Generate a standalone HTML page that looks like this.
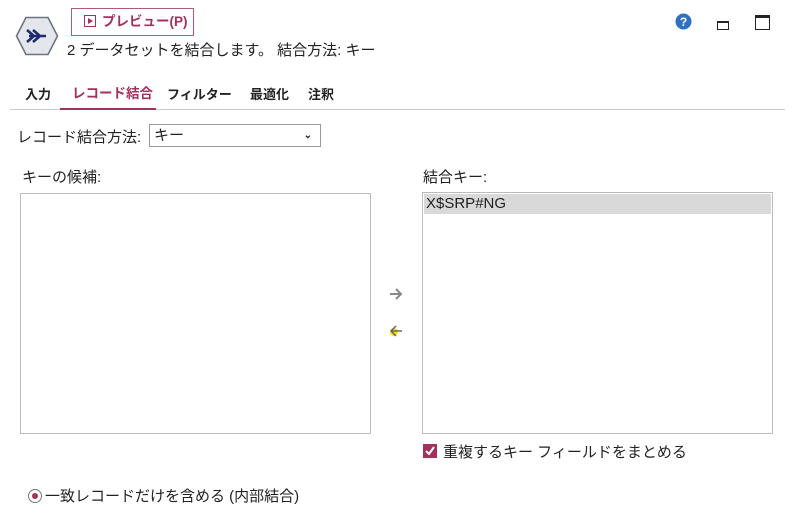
<!DOCTYPE html>
<html><head><meta charset="utf-8"><style>
body{margin:0;width:800px;height:518px;background:#fff;position:relative;overflow:hidden;font-family:"Liberation Sans","Noto Sans CJK JP",sans-serif;color:#222;font-size:15px}
.a{position:absolute;white-space:nowrap}
</style></head><body>
<svg class="a" style="left:15px;top:16px" width="44" height="40" viewBox="0 0 44 40">
<polygon points="11,1.5 33,1.5 42.5,20 33,38.5 11,38.5 1.5,20" fill="#e3e7ec" stroke="#6b7480" stroke-width="1.6"/>
<path d="M12 14 L19 20 L12 26 M18 14 L25 20 L18 26 M14 20 H31" fill="none" stroke="#1f2a6e" stroke-width="2.6"/>
</svg>
<div class="a" style="left:71px;top:8px;width:123px;height:28px;border:1px solid #b05a7a;box-sizing:border-box;color:#a3305d;font-size:13.5px;font-weight:bold;line-height:26px;padding-left:12px">
<span style="display:inline-block;width:10px;height:10px;border:1px solid #a3305d;vertical-align:-1px;position:relative;margin-right:6px"><span style="position:absolute;left:3px;top:2px;border-left:5px solid #a3305d;border-top:3px solid transparent;border-bottom:3px solid transparent"></span></span>プレビュー(P)</div>
<div class="a" style="left:67px;top:39px;font-size:15px">2 データセットを結合します。 結合方法: キー</div>
<svg class="a" style="left:675px;top:13px" width="17" height="17"><circle cx="8.5" cy="8.5" r="8" fill="#2f6fc4"/><text x="8.5" y="13" fill="#fff" font-size="12" font-weight="bold" text-anchor="middle" font-family="Liberation Sans">?</text></svg>
<div class="a" style="left:717px;top:21px;width:10px;height:6px;border:1px solid #222;border-top-width:2px"></div>
<div class="a" style="left:755px;top:15px;width:13px;height:11px;border:1px solid #222;border-top-width:3px"></div>
<div class="a" style="left:25px;top:84px;font-size:13px;font-weight:bold">入力</div>
<div class="a" style="left:72px;top:82px;font-size:13.5px;font-weight:bold;color:#a3305d">レコード結合</div>
<div class="a" style="left:167px;top:84px;font-size:13px;font-weight:bold">フィルター</div>
<div class="a" style="left:250px;top:84px;font-size:13px;font-weight:bold">最適化</div>
<div class="a" style="left:308px;top:84px;font-size:13px;font-weight:bold">注釈</div>
<div class="a" style="left:10px;top:109px;width:775px;height:1px;background:#ccc"></div>
<div class="a" style="left:60px;top:108px;width:96px;height:2px;background:#a3305d"></div>
<div class="a" style="left:17px;top:126px">レコード結合方法:</div>
<div class="a" style="left:149px;top:124px;width:172px;height:23px;border:1px solid #999;box-sizing:border-box;line-height:21px;padding-left:4px">キー<span style="position:absolute;right:8px;top:0;font-size:10px;font-weight:bold">&#8964;</span></div>
<div class="a" style="left:22px;top:166px">キーの候補:</div>
<div class="a" style="left:20px;top:193px;width:351px;height:241px;border:1px solid #bbb;box-sizing:border-box"></div>
<div class="a" style="left:423px;top:166px">結合キー:</div>
<div class="a" style="left:422px;top:192px;width:351px;height:242px;border:1px solid #bbb;box-sizing:border-box;padding:1px">
<div style="background:#d9d9d9;height:20px;line-height:20px;padding-left:2px">X$SRP#NG</div></div>
<svg class="a" style="left:388px;top:287px" width="16" height="14"><path d="M2 7H13M8 2L13 7L8 12" fill="none" stroke="#888" stroke-width="2"/></svg>
<svg class="a" style="left:388px;top:324px" width="16" height="14"><circle cx="6" cy="8" r="4" fill="#f5e400"/><path d="M3 7H14M8 2L3 7L8 12" fill="none" stroke="#666" stroke-width="1.5"/></svg>
<div class="a" style="left:423px;top:444px;width:14px;height:14px;background:#a3305d"><svg width="14" height="14"><path d="M3 7L6 10L11 3" fill="none" stroke="#fff" stroke-width="2"/></svg></div>
<div class="a" style="left:443px;top:441px">重複するキー フィールドをまとめる</div>
<div class="a" style="left:28px;top:489px;width:12px;height:12px;border:1px solid #777;border-radius:50%"><div style="position:absolute;left:3px;top:3px;width:6px;height:6px;border-radius:50%;background:#a3305d"></div></div>
<div class="a" style="left:45px;top:485px">一致レコードだけを含める (内部結合)</div>
</body></html>
